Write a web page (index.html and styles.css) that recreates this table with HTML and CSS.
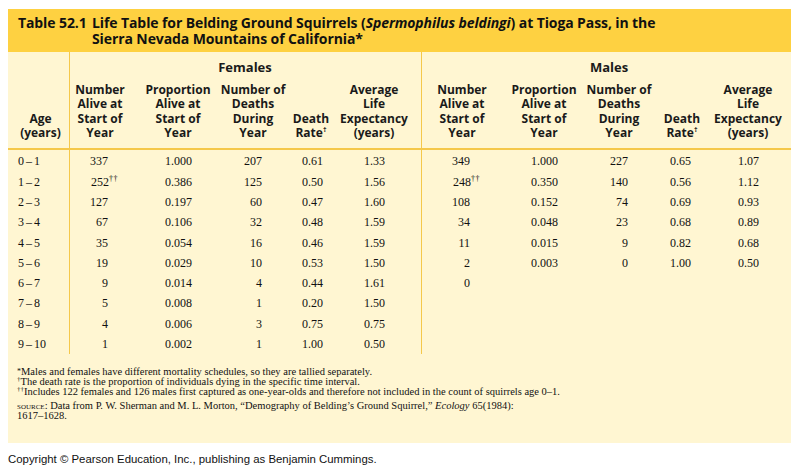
FILE: index.html
```html
<!DOCTYPE html>
<html>
<head>
<meta charset="utf-8">
<link rel="stylesheet" href="styles.css">
</head>
<body>
<div class="panel">
  <div class="caption">
    <span class="cap-label">Table 52.1</span>
    <span class="cap-text">Life Table for Belding Ground Squirrels (<i>Spermophilus beldingi</i>) at Tioga Pass, in the Sierra Nevada Mountains of California*</span>
  </div>
  <div class="table">
    <div class="thead">
      <div class="h-age">Age<br>(years)</div>
      <div class="h-group h-fem">Females</div>
      <div class="h-group h-male">Males</div>
      <div class="h"><span>Number<br>Alive at<br>Start of<br>Year</span></div>
      <div class="h"><span>Proportion<br>Alive at<br>Start of<br>Year</span></div>
      <div class="h"><span>Number of<br>Deaths<br>During<br>Year</span></div>
      <div class="h"><span>Death<br>Rate<sup class="dg">†</sup></span></div>
      <div class="h h-f5"><span>Average<br>Life<br>Expectancy<br>(years)</span></div>
      <div class="h"><span>Number<br>Alive at<br>Start of<br>Year</span></div>
      <div class="h"><span>Proportion<br>Alive at<br>Start of<br>Year</span></div>
      <div class="h"><span>Number of<br>Deaths<br>During<br>Year</span></div>
      <div class="h"><span>Death<br>Rate<sup class="dg">†</sup></span></div>
      <div class="h h-m5"><span>Average<br>Life<br>Expectancy<br>(years)</span></div>
    </div>
    <div class="tbody">
      <div class="row"><div class="c-age">0 – 1</div><div class="c1">337</div><div class="c2">1.000</div><div class="c3">207</div><div class="c4">0.61</div><div class="c5">1.33</div><div class="c6">349</div><div class="c7">1.000</div><div class="c8">227</div><div class="c9">0.65</div><div class="c10">1.07</div></div>
      <div class="row"><div class="c-age">1 – 2</div><div class="c1">252<span class="sup">††</span></div><div class="c2">0.386</div><div class="c3">125</div><div class="c4">0.50</div><div class="c5">1.56</div><div class="c6">248<span class="sup">††</span></div><div class="c7">0.350</div><div class="c8">140</div><div class="c9">0.56</div><div class="c10">1.12</div></div>
      <div class="row"><div class="c-age">2 – 3</div><div class="c1">127</div><div class="c2">0.197</div><div class="c3">60</div><div class="c4">0.47</div><div class="c5">1.60</div><div class="c6">108</div><div class="c7">0.152</div><div class="c8">74</div><div class="c9">0.69</div><div class="c10">0.93</div></div>
      <div class="row"><div class="c-age">3 – 4</div><div class="c1">67</div><div class="c2">0.106</div><div class="c3">32</div><div class="c4">0.48</div><div class="c5">1.59</div><div class="c6">34</div><div class="c7">0.048</div><div class="c8">23</div><div class="c9">0.68</div><div class="c10">0.89</div></div>
      <div class="row"><div class="c-age">4 – 5</div><div class="c1">35</div><div class="c2">0.054</div><div class="c3">16</div><div class="c4">0.46</div><div class="c5">1.59</div><div class="c6">11</div><div class="c7">0.015</div><div class="c8">9</div><div class="c9">0.82</div><div class="c10">0.68</div></div>
      <div class="row"><div class="c-age">5 – 6</div><div class="c1">19</div><div class="c2">0.029</div><div class="c3">10</div><div class="c4">0.53</div><div class="c5">1.50</div><div class="c6">2</div><div class="c7">0.003</div><div class="c8">0</div><div class="c9">1.00</div><div class="c10">0.50</div></div>
      <div class="row"><div class="c-age">6 – 7</div><div class="c1">9</div><div class="c2">0.014</div><div class="c3">4</div><div class="c4">0.44</div><div class="c5">1.61</div><div class="c6">0</div></div>
      <div class="row"><div class="c-age">7 – 8</div><div class="c1">5</div><div class="c2">0.008</div><div class="c3">1</div><div class="c4">0.20</div><div class="c5">1.50</div></div>
      <div class="row"><div class="c-age">8 – 9</div><div class="c1">4</div><div class="c2">0.006</div><div class="c3">3</div><div class="c4">0.75</div><div class="c5">0.75</div></div>
      <div class="row"><div class="c-age">9 – 10</div><div class="c1">1</div><div class="c2">0.002</div><div class="c3">1</div><div class="c4">1.00</div><div class="c5">0.50</div></div>
    </div>
  </div>
  <div class="notes">
    <p class="note"><span class="ast">*</span>Males and females have different mortality schedules, so they are tallied separately.</p>
    <p class="note"><sup class="nd">†</sup>The death rate is the proportion of individuals dying in the specific time interval.</p>
    <p class="note"><sup class="nd">††</sup>Includes 122 females and 126 males first captured as one-year-olds and therefore not included in the count of squirrels age 0–1.</p>
    <p class="source"><span class="sc">source</span>: Data from P. W. Sherman and M. L. Morton, “Demography of Belding’s Ground Squirrel,” <i>Ecology</i> 65(1984):<br>1617–1628.</p>
  </div>
</div>
<div class="copyright">Copyright © Pearson Education, Inc., publishing as Benjamin Cummings.</div>
</body>
</html>
```

FILE: styles.css
```css
html, body {
  margin: 0;
  padding: 0;
  background: #ffffff;
}

body {
  font-family: "Liberation Serif", "Times New Roman", serif;
  color: #111;
}

.panel {
  width: 783px;
  margin: 9px 0 0 8px;
  background: #fff6d2;
  padding-bottom: 22px;
}

.caption {
  display: flex;
  height: 43px;
  box-sizing: border-box;
  padding: 6px 0 0 10px;
  background: #fed141;
  font-family: "Open Sans", "Liberation Sans", sans-serif;
  font-weight: 700;
  font-size: 14px;
  line-height: 16px;
  color: #111;
  letter-spacing: -0.1px;
}

.cap-label {
  flex: 0 0 74px;
}

.cap-text {
  width: 580px;
}

.table {
  background-image:
    linear-gradient(#f5c84a, #f5c84a),
    linear-gradient(#f5c84a, #f5c84a);
  background-size: 1px 100%, 1px 100%;
  background-position: 61px 0, 413px 0;
  background-repeat: no-repeat;
}

.thead {
  display: grid;
  grid-template-columns: 61px 62px 94px 56px 60px 80px 82px 82px 68px 58px 80px;
  grid-template-rows: 16px auto;
  row-gap: 8px;
  padding: 7px 0 8px;
  border-bottom: 2px solid #f5c84a;
  font-family: "Open Sans", "Liberation Sans", sans-serif;
  font-weight: 700;
  color: #1a1a1a;
}

.h-age {
  grid-column: 1;
  grid-row: 1 / 3;
  align-self: end;
  text-align: center;
  font-size: 12px;
  line-height: 14.3px;
  padding-left: 4px;
}

.h-group {
  grid-row: 1;
  font-size: 13px;
  line-height: 16px;
  text-align: center;
}

.h-fem {
  grid-column: 2 / 7;
}

.h-male {
  grid-column: 7 / 12;
  padding-left: 6px;
}

.h {
  grid-row: 2;
  display: flex;
  flex-direction: column;
  justify-content: flex-end;
  align-items: center;
  text-align: center;
  font-size: 12px;
  line-height: 14.3px;
  white-space: nowrap;
}

.h-f5 {
  padding-right: 14px;
}

.h-m5 {
  padding-right: 6px;
}

.dg {
  font-size: 7px;
  line-height: 0;
  vertical-align: 5px;
}

.tbody {
  padding-top: 1px;
}

.row {
  display: grid;
  grid-template-columns: 61px 62px 94px 56px 60px 80px 82px 82px 68px 58px 80px;
  height: 20.33px;
  font-size: 12px;
  line-height: 20px;
  color: #111;
}

.c-age {
  padding-left: 10px;
  word-spacing: -1px;
}

.c1, .c2, .c3, .c4, .c5, .c6, .c7, .c8, .c9, .c10 {
  text-align: right;
}

.c1 { padding-right: 23px; }
.c2 { padding-right: 33px; }
.c3 { padding-right: 19px; }
.c4 { padding-right: 18px; }
.c5 { padding-right: 36px; }
.c6 { padding-right: 33px; }
.c7 { padding-right: 27px; }
.c8 { padding-right: 25px; }
.c9 { padding-right: 20px; }
.c10 { padding-right: 32px; }

.sup {
  font-size: 8px;
  line-height: 0;
  vertical-align: 5px;
  margin-right: -10px;
  letter-spacing: 0.5px;
}

.notes {
  padding: 13px 0 0 9px;
  font-size: 10.5px;
  color: #111;
}

.note {
  margin: 0;
  line-height: 10px;
}

.ast {
  font-size: 8px;
  vertical-align: 1px;
}

.nd {
  font-size: 7px;
  line-height: 0;
  vertical-align: 4px;
}

.source {
  margin: 4px 0 0;
  line-height: 10px;
}

.sc {
  font-variant: small-caps;
  text-transform: lowercase;
}

.copyright {
  margin: 10px 0 0 8px;
  font-family: "Liberation Sans", Arial, sans-serif;
  font-size: 11.4px;
  line-height: 12px;
  color: #111;
}
```
